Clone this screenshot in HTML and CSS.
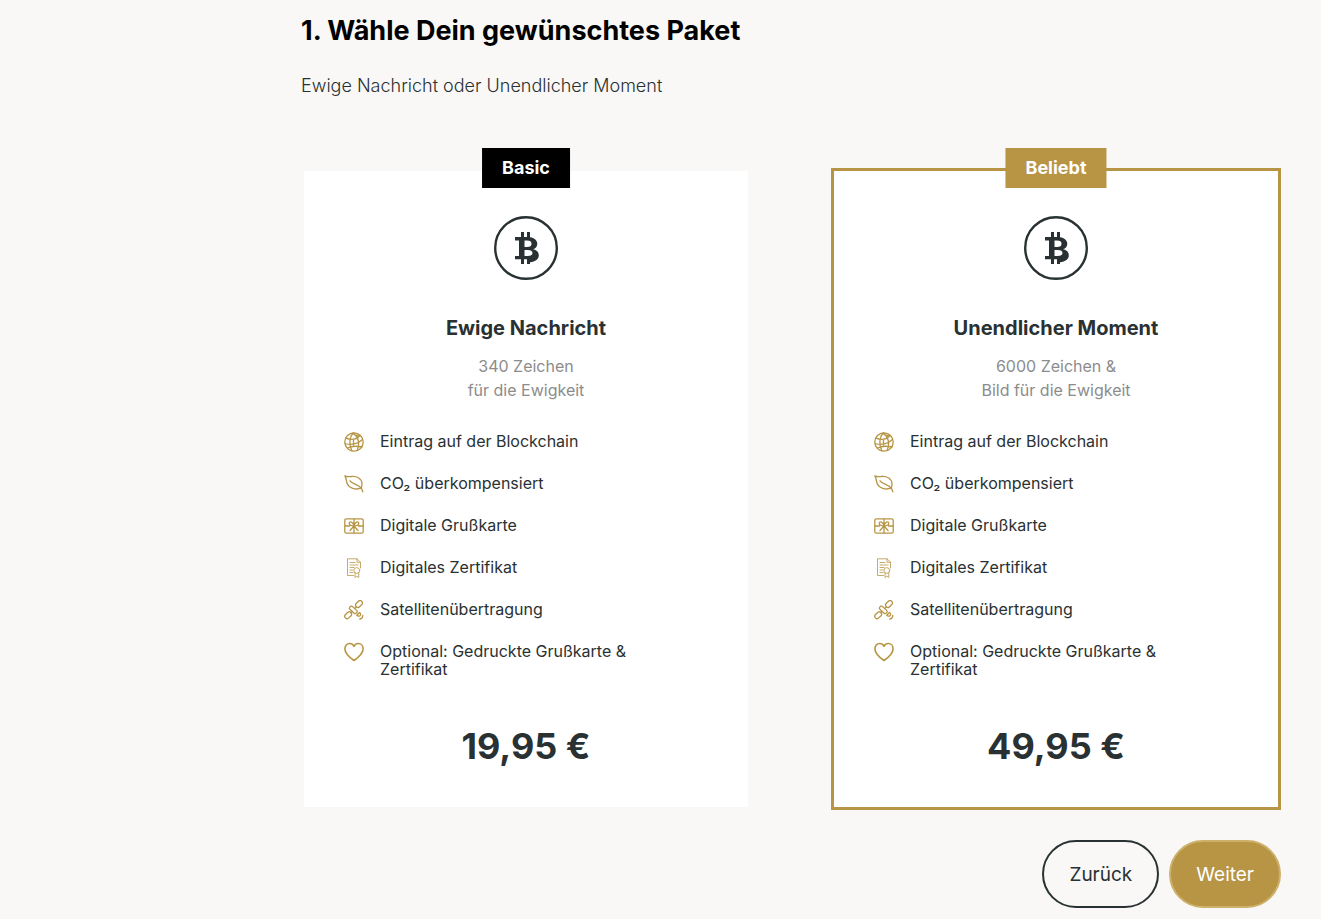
FILE: index.html
```html
<!DOCTYPE html>
<html lang="de">
<head>
<meta charset="utf-8">
<meta name="viewport" content="width=device-width, initial-scale=1">
<title>Paket wählen</title>
<link rel="stylesheet" href="styles.css">
</head>
<body>
<svg class="sprite" aria-hidden="true">
  <symbol id="coin" viewBox="0 0 64 64">
    <circle cx="32" cy="32" r="30.8" fill="none" stroke="#293133" stroke-width="2.4"/>
    <path fill="#293133" fill-rule="evenodd" d="M27 16h3v5h3v-5h3v5.300c4.500.700 7.300 3.200 7.300 6.500 0 2.600-1.500 4.600-4.300 5.500 3.600.7 5.800 2.900 5.800 6 0 3.900-3.300 6.500-8.800 6.900V48h-3v-4.700h-3V48h-3v-4.700h-6V40h4V24.500h-4V21h6zM30.500 24.500V31h2.700c2.800 0 4.300-1.200 4.300-3.300s-1.500-3.200-4.300-3.200zM30.500 34v6h3.300c3 0 4.700-1 4.700-3s-1.700-3-4.700-3z"/>
  </symbol>
  <symbol id="globe" viewBox="0 0 20 20">
    <circle cx="10" cy="10" r="9.200"/>
    <path d="M9 1C5.500 5 4.500 13 8 19M9.500 1c5.500 5 6.500 11 3.500 17.500M1.800 6.200c5 1.800 10.500 1.300 14-2.200M1 11.500c6 2 13 .5 17.500-4M3.500 16c4-2 9-2.200 14.500-1M9 1c1.500 2 4 3 7 3M9.500 7v6"/>
  </symbol>
  <symbol id="leaf" viewBox="0 0 20 20">
    <path d="M.9 1.800c1.500 1.300 3.600 1 6.300.7 6-.5 10.600 2 10.800 7.200 0 1.500-.2 2.900-.6 4.100-2.200 1.200-5.700 1.500-8.600.6C4 13 2.900 10 2.500 7.200 2.200 5 1.800 3.300.9 1.800zM6 6.800c2.200 3.200 7.800 3.300 11 7 .9 1 1.400 2.500 1.800 4"/>
  </symbol>
  <symbol id="gift" viewBox="0 0 20 20">
    <rect x=".8" y="2.800" width="18.400" height="14.400" rx="1.500"/>
    <path d="M10 3v14M1 10h4.500M14.500 10H19M10 10C7.500 10 5 9 5.200 7c.3-2 4-1.500 4.800 3zm0 0c2.500 0 5-1 4.800-3-.3-2-4-1.500-4.800 3zM10 10l-4 4.500M10 10l4 4.500"/>
  </symbol>
  <symbol id="certificate" viewBox="0 0 20 20">
    <path d="M9.500 17.500H3.500V.8h9.500l3.500 3.500V10M13 .8v3.500h3.500M6 4.500h5M6 7h8M6 9.500h4M6 12h3M6 14.500h3"/>
    <circle cx="12.800" cy="12.500" r="2.900"/>
    <path d="M11 14.800v4.700l1.800-1.300 2 1.300v-4.700"/>
  </symbol>
  <symbol id="satellite" viewBox="0 0 20 20">
    <rect x="-3.800" y="-2.300" width="7.600" height="4.600" rx="2" transform="translate(15 4) rotate(-43)"/>
    <rect x="-3.800" y="-2.300" width="7.600" height="4.600" rx="2" transform="translate(4.200 15.200) rotate(-43)"/>
    <rect x="-4.400" y="-1.900" width="8.800" height="3.800" rx="1.500" transform="translate(9.300 9.800) rotate(43)"/>
    <path d="M11.300 8l1.200-1.200M6.700 12.700l1-1M12.700 15.300l2.800-2.800c1.200.7 1.500 2 .8 3s-2.400 1-3.600-.2zM18.800 15.500c0 2-1 3.200-3 3.500"/>
  </symbol>
  <symbol id="heart" viewBox="0 0 20 20">
    <path d="M10 18.500C5 15 .9 11.500.9 6.700.9 3.700 3 1.500 5.700 1.500c2 0 3.400 1 4.300 2.800.9-1.800 2.300-2.800 4.300-2.800 2.700 0 4.800 2.200 4.800 5.200 0 4.800-4.100 8.300-9.100 11.800z"/>
  </symbol>
</svg>
<main class="page">
  <header class="intro">
    <h1 class="title">1. Wähle Dein gewünschtes Paket</h1>
    <p class="subtitle">Ewige Nachricht oder Unendlicher Moment</p>
  </header>
  <div class="packages">
    <section class="card">
      <span class="badge">Basic</span>
      <svg class="coin"><use href="#coin"/></svg>
      <h2 class="name">Ewige Nachricht</h2>
      <p class="summary">340 Zeichen<br>für die Ewigkeit</p>
      <ul class="features">
        <li class="feature"><svg class="icon"><use href="#globe"/></svg><span>Eintrag auf der Blockchain</span></li>
        <li class="feature"><svg class="icon"><use href="#leaf"/></svg><span>CO₂ überkompensiert</span></li>
        <li class="feature"><svg class="icon"><use href="#gift"/></svg><span>Digitale Grußkarte</span></li>
        <li class="feature"><svg class="icon icon-fine"><use href="#certificate"/></svg><span>Digitales Zertifikat</span></li>
        <li class="feature"><svg class="icon"><use href="#satellite"/></svg><span>Satellitenübertragung</span></li>
        <li class="feature"><svg class="icon icon-bold"><use href="#heart"/></svg><span>Optional: Gedruckte Grußkarte &amp; Zertifikat</span></li>
      </ul>
      <p class="price">19,95 €</p>
    </section>
    <section class="card card-popular">
      <span class="badge">Beliebt</span>
      <svg class="coin"><use href="#coin"/></svg>
      <h2 class="name">Unendlicher Moment</h2>
      <p class="summary">6000 Zeichen &amp;<br>Bild für die Ewigkeit</p>
      <ul class="features">
        <li class="feature"><svg class="icon"><use href="#globe"/></svg><span>Eintrag auf der Blockchain</span></li>
        <li class="feature"><svg class="icon"><use href="#leaf"/></svg><span>CO₂ überkompensiert</span></li>
        <li class="feature"><svg class="icon"><use href="#gift"/></svg><span>Digitale Grußkarte</span></li>
        <li class="feature"><svg class="icon icon-fine"><use href="#certificate"/></svg><span>Digitales Zertifikat</span></li>
        <li class="feature"><svg class="icon"><use href="#satellite"/></svg><span>Satellitenübertragung</span></li>
        <li class="feature"><svg class="icon icon-bold"><use href="#heart"/></svg><span>Optional: Gedruckte Grußkarte &amp; Zertifikat</span></li>
      </ul>
      <p class="price">49,95 €</p>
    </section>
  </div>
  <div class="actions">
    <button class="button" type="button">Zurück</button>
    <button class="button button-primary" type="button">Weiter</button>
  </div>
</main>
</body>
</html>
```
FILE: styles.css
```css
* {
  box-sizing: border-box;
}

body {
  margin: 0;
  background: #f9f8f6;
  color: #293133;
  font-family: Inter, "Liberation Sans", sans-serif;
  font-size: 16px;
}

h1, h2, p, ul {
  margin: 0;
  padding: 0;
}

.sprite {
  position: absolute;
  width: 0;
  height: 0;
}

.page {
  padding: 13px 40px 10px 301px;
}

.title {
  color: #000;
  font-size: 27px;
  font-weight: 700;
  line-height: 36px;
}

.subtitle {
  margin-top: 23px;
  font-size: 18px;
  font-weight: 300;
  line-height: 28px;
}

.packages {
  display: grid;
  grid-template-columns: 1fr 1fr;
  gap: 80px;
  margin-top: 68px;
}

.card {
  position: relative;
  display: flex;
  flex-direction: column;
  align-items: center;
  padding: 45px 40px 37px;
  border: 3px solid transparent;
  background: #fff padding-box;
  text-align: center;
}

.card-popular {
  border-color: #b79545;
}

.badge {
  position: absolute;
  top: -23px;
  left: 50%;
  transform: translateX(-50%);
  padding: 0 20px;
  background: #000;
  color: #fff;
  font-size: 18px;
  font-weight: 700;
  line-height: 40px;
}

.card-popular .badge {
  background: #b79545;
}

.coin {
  width: 64px;
  height: 64px;
}

.name {
  margin-top: 36px;
  font-size: 20px;
  font-weight: 700;
  line-height: 24px;
}

.summary {
  margin-top: 14px;
  color: #8c8c8c;
  line-height: 24px;
}

.features {
  display: flex;
  flex-direction: column;
  gap: 24px;
  align-self: stretch;
  margin-top: 30px;
  list-style: none;
  text-align: left;
}

.feature {
  display: flex;
  gap: 16px;
  padding-right: 40px;
  line-height: 18px;
}

.icon {
  flex: none;
  width: 20px;
  height: 20px;
  margin-bottom: -2px;
  fill: none;
  stroke: #b79545;
  stroke-width: 1.3;
  stroke-linejoin: round;
  stroke-linecap: round;
}

.icon-fine {
  stroke-width: 0.8;
}

.icon-bold {
  stroke-width: 1.6;
}

.price {
  margin-top: 44px;
  font-size: 36px;
  font-weight: 700;
  line-height: 48px;
}

.actions {
  display: flex;
  justify-content: flex-end;
  gap: 10px;
  margin-top: 30px;
}

.button {
  padding: 2px 25px 0;
  border: 2px solid #293133;
  border-radius: 34px;
  background: transparent;
  color: #293133;
  font-family: inherit;
  font-size: 19px;
  line-height: 62px;
}

.button-primary {
  border-color: #cdb06a;
  background: #b79545;
  color: #fff;
}
```
